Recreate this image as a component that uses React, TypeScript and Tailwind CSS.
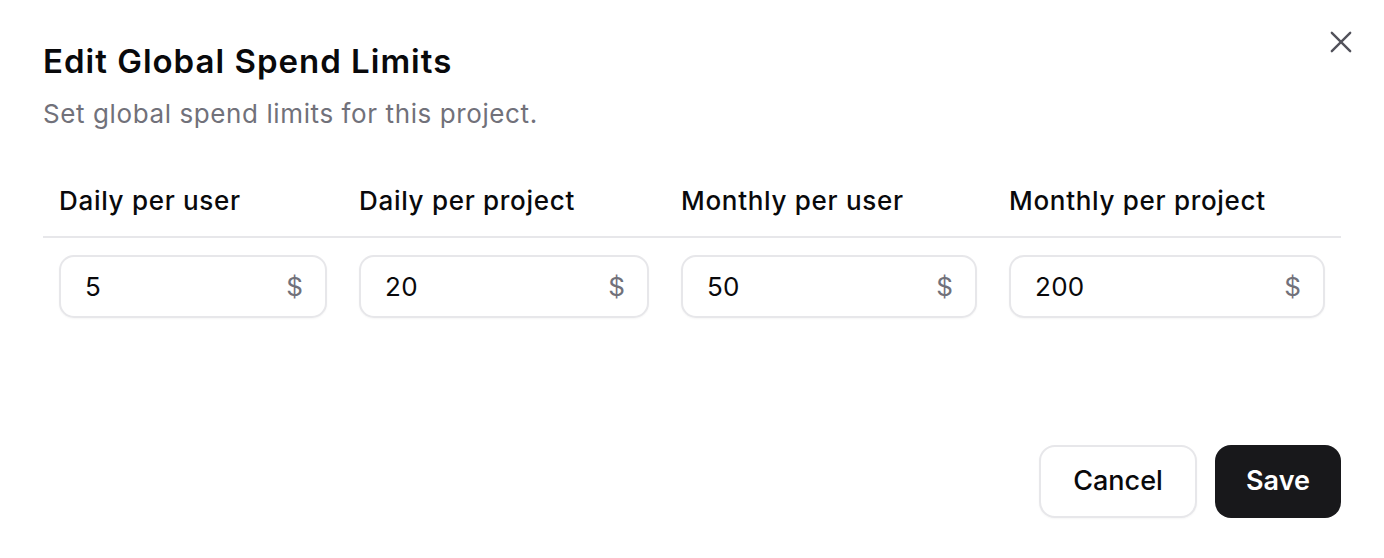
import { useState } from 'react';

type Limit = {
  key: string;
  label: string;
  value: string;
};

const initialLimits: Limit[] = [
  { key: 'dailyUser', label: 'Daily per user', value: '5' },
  { key: 'dailyProject', label: 'Daily per project', value: '20' },
  { key: 'monthlyUser', label: 'Monthly per user', value: '50' },
  { key: 'monthlyProject', label: 'Monthly per project', value: '200' },
];

function CloseIcon() {
  return (
    <svg
      viewBox="0 0 24 24"
      className="h-[22px] w-[22px]"
      fill="none"
      stroke="currentColor"
      strokeWidth="2.6"
      strokeLinecap="round"
    >
      <path d="M2 2l20 20M22 2L2 22" />
    </svg>
  );
}

function MoneyInput({
  id,
  value,
  onChange,
}: {
  id: string;
  value: string;
  onChange: (v: string) => void;
}) {
  return (
    <div className="flex h-[63px] items-center rounded-[15px] border-2 border-[#e7e7ea] bg-white pl-[24px] pr-[22px] shadow-[0_1px_2px_rgba(0,0,0,0.04)]">
      <input
        id={id}
        value={value}
        onChange={e => onChange(e.target.value)}
        className="min-w-0 flex-1 bg-transparent text-[26px] tracking-[0.3px] text-[#09090b] outline-none"
      />
      <span className="text-[26px] text-[#71717a]">$</span>
    </div>
  );
}

export default function App() {
  const [limits, setLimits] = useState(initialLimits);

  const update = (key: string, value: string) =>
    setLimits(prev => prev.map(l => (l.key === key ? { ...l, value } : l)));

  return (
    <div
      className="relative h-[558px] w-full bg-white px-[43px] pt-[39px] text-[#09090b]"
      style={{ fontFamily: 'Inter, "Noto Sans", sans-serif' }}
    >
      <button
        type="button"
        aria-label="Close"
        className="absolute right-[31px] top-[30px] p-[1px] text-[#52525b]"
      >
        <CloseIcon />
      </button>

      <h2 className="text-[33px] font-semibold leading-[44px] tracking-[1px]">
        Edit Global Spend Limits
      </h2>
      <p className="mt-[13px] text-[26px] leading-[36px] tracking-[0.6px] text-[#71717a]">
        Set global spend limits for this project.
      </p>

      <div className="mt-[50px] grid grid-cols-[300px_322px_328px_348px]">
        {limits.map(l => (
          <label
            key={l.key}
            htmlFor={l.key}
            className="border-b-2 border-[#e7e7ea] px-[16px] pb-[16px] text-[26px] font-medium leading-[38px] tracking-[0.7px]"
          >
            {l.label}
          </label>
        ))}
        {limits.map(l => (
          <div key={l.key} className="px-[16px] pt-[17px]">
            <MoneyInput id={l.key} value={l.value} onChange={v => update(l.key, v)} />
          </div>
        ))}
      </div>

      <div className="mt-[127px] flex justify-end gap-[18px]">
        <button
          type="button"
          className="h-[73px] w-[158px] rounded-[16px] border-2 border-[#e7e7ea] bg-white text-[27px] font-medium shadow-[0_1px_2px_rgba(0,0,0,0.04)]"
        >
          Cancel
        </button>
        <button
          type="button"
          className="h-[73px] w-[126px] rounded-[16px] bg-[#18181b] text-[27px] font-semibold text-white"
        >
          Save
        </button>
      </div>
    </div>
  );
}
